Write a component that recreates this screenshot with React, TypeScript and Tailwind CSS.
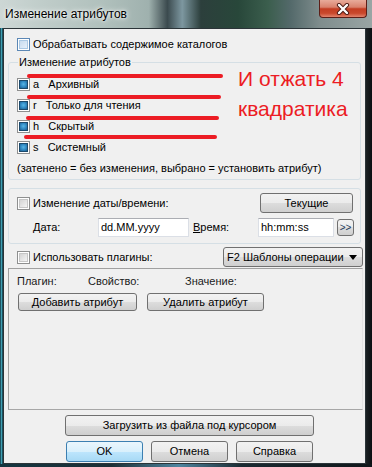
import React from "react";

// Win7-style checkbox: "empty" or "shaded" (indeterminate)
const CheckBox = ({ state = "empty", hot = false }: { state?: "empty" | "shaded"; hot?: boolean }) => (
  <span
    className={`flex h-[13px] w-[13px] shrink-0 items-center justify-center border bg-white ${
      hot ? "border-[#5b87b5]" : "border-[#8e8f8f]"
    }`}
  >
    {state === "shaded" ? (
      <span className="h-[9px] w-[9px] border border-[#1c4a6c] bg-[radial-gradient(circle_at_50%_45%,#57b6e6_0%,#2f88c2_55%,#1e5f8e_100%)]" />
    ) : (
      <span
        className={`h-[9px] w-[9px] border ${
          hot
            ? "border-[#a9c8e4] bg-[linear-gradient(135deg,#c8dcef_0%,#e6f0fa_100%)]"
            : "border-[#c6c6c6] bg-[linear-gradient(135deg,#d4d4d4_0%,#f4f4f4_100%)]"
        }`}
      />
    )}
  </span>
);

const Btn = ({
  children,
  className = "",
  primary = false,
}: {
  children: React.ReactNode;
  className?: string;
  primary?: boolean;
}) => (
  <div
    className={`flex items-center justify-center rounded-[3px] border ${
      primary
        ? "border-[#3c7fb1] bg-[linear-gradient(#eaf6fd_0%,#d9f0fc_50%,#bee6fd_50%,#a7d9f5_100%)]"
        : "border-[#707070] bg-[linear-gradient(#f2f2f2_0%,#ebebeb_50%,#dddddd_50%,#cfcfcf_100%)]"
    } ${className}`}
  >
    {children}
  </div>
);

const attrs = [
  { key: "a", label: "Архивный" },
  { key: "r", label: "Только для чтения" },
  { key: "h", label: "Скрытый" },
  { key: "s", label: "Системный" },
];

export default function App() {
  return (
    <div className="relative flex h-[467px] w-[372px] flex-col overflow-hidden bg-[#13252c] font-['Liberation_Sans',Arial,sans-serif] text-[11px] leading-[13px] text-black">
      {/* title bar over aero glass */}
      <div className="flex h-[28px] shrink-0 bg-[linear-gradient(90deg,#cdd7d5_0%,#bfccc9_12%,#b0c0bc_28%,#9fb1ae_40%,#3b4a4e_45%,#7d97a0_49%,#2c3f3c_54%,#28473a_64%,#3b5e4d_72%,#53696a_78%,#7f8d8d_86%,#99a5a4_100%)]">
        <div className="pl-[5px] pt-[7px] text-[12px] leading-[14px] text-black [text-shadow:0_0_6px_#ffffff,0_0_3px_#ffffff]">
          Изменение атрибутов
        </div>
        <div className="ml-auto mr-[5px] flex h-[18px] w-[48px] items-center justify-center rounded-b-[4px] border border-t-0 border-[#5c1e17] bg-[linear-gradient(#e8ab9a_0%,#d9826d_42%,#c33d22_52%,#c9482c_78%,#e2846d_100%)]">
          <svg width="14" height="12" viewBox="0 0 14 12">
            <path d="M3 2 L11 10 M11 2 L3 10" stroke="#4a1a14" strokeWidth="4.2" strokeLinecap="round" />
            <path d="M3 2 L11 10 M11 2 L3 10" stroke="#ffffff" strokeWidth="2.4" strokeLinecap="round" />
          </svg>
        </div>
      </div>

      <div className="flex h-[436px] shrink-0">
        {/* left frame */}
        <div className="w-[3px] shrink-0 bg-[linear-gradient(90deg,#0e2f3a_0%,#3f9fb3_50%,#0d2a34_100%)]" />

        {/* client area */}
        <div className="flex w-[363px] shrink-0 flex-col border border-[#2b3438] bg-[#f0f0f0]">
          <div className="flex h-[13px] items-center gap-[3px] pl-[13px] pt-0 mt-[9px]">
            <CheckBox hot />
            <span>Обрабатывать содержимое каталогов</span>
          </div>

          {/* attribute group */}
          <div className="relative ml-[4px] mr-[4px] mt-[11px] h-[118px] rounded-[3px] border border-[#d5dfe5] pl-[8px] pt-[11px]">
            <span className="absolute -top-[7px] left-[9px] bg-[#f0f0f0] px-[1px]">Изменение атрибутов</span>
            {attrs.map((a) => (
              <div key={a.key} className="flex h-[21px] items-center gap-[3px]">
                <CheckBox state="shaded" />
                <span className="whitespace-pre">{a.key}   {a.label}</span>
              </div>
            ))}
            <div className="flex h-[21px] items-center">(затенено = без изменения, выбрано = установить атрибут)</div>
          </div>

          {/* date/time group */}
          <div className="ml-[4px] mr-[4px] mt-[8px] h-[56px] rounded-[3px] border border-[#d5dfe5] pt-[4px]">
            <div className="flex h-[20px] items-center pl-[8px] pr-[7px]">
              <CheckBox />
              <span className="ml-[3px]">Изменение даты/времени:</span>
              <Btn className="ml-auto h-[20px] w-[93px]">Текущие</Btn>
            </div>
            <div className="mt-[5px] flex h-[19px] items-center pl-[24px]">
              <span className="w-[65px]">
                <span className="underline underline-offset-1">Д</span>ата:
              </span>
              <div className="flex h-[19px] w-[91px] items-center border border-[#dbdfe6] border-t-[#abadb3] bg-white pl-[2px]">
                dd.MM.yyyy
              </div>
              <span className="ml-[4px] w-[65px]">
                <span className="underline underline-offset-1">В</span>ремя:
              </span>
              <div className="flex h-[19px] w-[76px] items-center border border-[#dbdfe6] border-t-[#abadb3] bg-white pl-[2px]">
                hh:mm:ss
              </div>
              <Btn className="ml-[3px] h-[17px] w-[17px] text-[10px] text-[#1e395b]">&gt;&gt;</Btn>
            </div>
          </div>

          {/* plugins row */}
          <div className="mt-[3px] flex h-[20px] items-center pl-[13px] pr-[2px]">
            <CheckBox />
            <span className="ml-[3px]">Использовать плагины:</span>
            <Btn className="ml-auto h-[20px] w-[140px] !justify-start pl-[3px] pr-[5px]">
              <span>F2 Шаблоны операции</span>
              <svg className="ml-auto" width="8" height="5" viewBox="0 0 8 5">
                <path d="M0 0 H8 L4 5 Z" fill="#000" />
              </svg>
            </Btn>
          </div>

          {/* plugin panel */}
          <div className="ml-[4px] mr-[2px] mt-[1px] h-[142px] border border-l-[#a0a0a0] border-t-[#a0a0a0] border-r-[#e3e3e3] border-b-[#a7a7a7] pt-[5px]">
            <div className="flex h-[14px] items-center pl-[8px] text-[#1a1a1a]">
              <span className="w-[71px]">Плагин:</span>
              <span className="w-[97px]">Свойство:</span>
              <span>Значение:</span>
            </div>
            <div className="mt-[5px] flex gap-[10px] pl-[9px]">
              <Btn className="h-[18px] w-[119px]">Добавить атрибут</Btn>
              <Btn className="h-[18px] w-[117px]">Удалить атрибут</Btn>
            </div>
          </div>

          <Btn className="ml-[61px] mt-[5px] h-[21px] w-[249px]">Загрузить из файла под курсором</Btn>
          <div className="ml-[62px] mt-[5px] flex gap-[8px]">
            <Btn primary className="h-[21px] w-[77px]">OK</Btn>
            <Btn className="h-[21px] w-[77px]">Отмена</Btn>
            <Btn className="h-[21px] w-[77px]">Справка</Btn>
          </div>
        </div>

        {/* right frame */}
        <div className="w-[6px] shrink-0 bg-[linear-gradient(90deg,#1b2124_0%,#0b0f12_100%)]" />
      </div>
      <div className="flex-1 bg-[linear-gradient(90deg,#143540_0%,#1c2e35_30%,#4f86a0_48%,#1a2a31_65%,#10171b_100%)]" />

      {/* red annotation on top of the screenshot */}
      <svg className="pointer-events-none absolute left-0 top-0" width="372" height="467" viewBox="0 0 372 467">
        <g stroke="#ec1c24" strokeWidth="4" strokeLinecap="round">
          <line x1="29" y1="76" x2="221" y2="76" />
          <line x1="29" y1="97" x2="219" y2="97" />
          <line x1="28" y1="118" x2="217" y2="118" />
          <line x1="26" y1="137" x2="215" y2="137" />
        </g>
      </svg>
      <div className="pointer-events-none absolute left-[238px] top-[64px] text-[21px] leading-[30px] text-[#ec1c24]">
        И отжать 4
        <br />
        квадратика
      </div>
    </div>
  );
}
